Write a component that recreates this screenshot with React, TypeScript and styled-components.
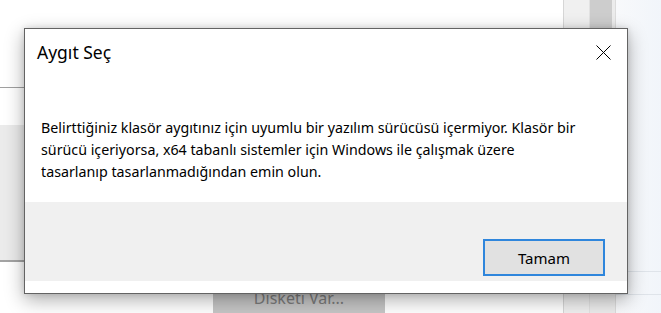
import styled, { createGlobalStyle } from 'styled-components'

const GlobalStyle = createGlobalStyle`
  html, body {
    margin: 0;
    padding: 0;
    background: #ffffff;
    overflow: hidden;
  }
  body {
    font-family: 'Noto Sans', 'Liberation Sans', sans-serif;
  }
`

const Desktop = styled.div`
  position: relative;
  display: flex;
  width: 661px;
  height: 313px;
  overflow: hidden;
`

const LeftPane = styled.div`
  display: flex;
  flex-direction: column;
  width: 563px;
  border-right: 1px solid #d6d6d6;
  background: #ffffff;
`

const PaneHeader = styled.div`
  height: 90px;
  border-bottom: 1px solid #a0a0a0;
`

const PaneGap = styled.div`
  height: 38px;
`

const ListArea = styled.div`
  height: 139px;
  background: #ebebeb;
  border-bottom: 2px solid #a3a3a3;
`

const PaneFooter = styled.div`
  flex: 1;
  display: flex;
  padding: 25px 0 0 213px;
`

const DisabledButton = styled.div`
  width: 172px;
  height: 26px;
  background: #c6c6c6;
  color: #7b7b7b;
  font-size: 16px;
  display: flex;
  justify-content: center;
  padding-top: 0;
  box-sizing: border-box;
`

const Strip = styled.div`
  width: 25px;
  background: #f0f0f0;
  border-right: 1px solid #e2e2e2;
`

const ScrollTrack = styled.div`
  width: 25px;
  background: #ececec;
  border-right: 1px solid #dcdcdc;
`

const ScrollThumb = styled.div`
  height: 120px;
  margin: 0 3px 0 0;
  background: #cdcdcd;
`

const RightArea = styled.div`
  flex: 1;
  display: flex;
  flex-direction: column;
  background: linear-gradient(90deg, #f8f9fb, #f1f5fa);
`

const RightRow = styled.div<{ $h: number }>`
  height: ${(p) => p.$h}px;
  border-bottom: 1px solid #dfe4ea;
`

const Dialog = styled.div`
  position: absolute;
  left: 24px;
  top: 28px;
  width: 604px;
  height: 266px;
  box-sizing: border-box;
  border: 1px solid #636363;
  background: #ffffff;
  display: flex;
  flex-direction: column;
  box-shadow: 0 6px 18px rgba(0, 0, 0, 0.32), 0 0 6px rgba(0, 0, 0, 0.12);
`

const TitleBar = styled.div`
  height: 46px;
  display: flex;
  align-items: center;
  justify-content: space-between;
  padding: 0 16px 0 12px;
`

const Title = styled.span`
  font-size: 17.5px;
  color: #000000;
`

const CloseIcon = styled.svg`
  width: 15px;
  height: 15px;
  display: block;
`

const Body = styled.div`
  height: 127px;
  box-sizing: border-box;
  padding: 42px 16px 0 16px;
  font-size: 14.25px;
  line-height: 22px;
  color: #000000;
`

const Footer = styled.div`
  height: 79px;
  background: #f0f0f0;
  display: flex;
  justify-content: flex-end;
  align-items: flex-end;
  padding: 0 22px 5px 0;
  box-sizing: border-box;
`

const PrimaryButton = styled.button`
  width: 122px;
  height: 37px;
  box-sizing: border-box;
  border: 2px solid #2f86dc;
  background: #e1e1e1;
  color: #000000;
  font-family: inherit;
  font-size: 15px;
  padding: 0;
`

const BottomStrip = styled.div`
  flex: 1;
  background: #ffffff;
`

export default function App() {
  return (
    <>
      <GlobalStyle />
      <Desktop>
        <LeftPane>
          <PaneHeader />
          <PaneGap />
          <ListArea />
          <PaneFooter>
            <DisabledButton>Disketi Var...</DisabledButton>
          </PaneFooter>
        </LeftPane>
        <Strip />
        <ScrollTrack>
          <ScrollThumb />
        </ScrollTrack>
        <RightArea>
          <RightRow $h={271} />
          <RightRow $h={22} />
        </RightArea>

        <Dialog>
          <TitleBar>
            <Title>Aygıt Seç</Title>
            <CloseIcon viewBox="0 0 15 15">
              <path d="M0.5 0.5 L14.5 14.5 M14.5 0.5 L0.5 14.5" stroke="#000" strokeWidth="1" fill="none" />
            </CloseIcon>
          </TitleBar>
          <Body>
            Belirttiğiniz klasör aygıtınız için uyumlu bir yazılım sürücüsü içermiyor. Klasör bir
            <br />
            sürücü içeriyorsa, x64 tabanlı sistemler için Windows ile çalışmak üzere
            <br />
            tasarlanıp tasarlanmadığından emin olun.
          </Body>
          <Footer>
            <PrimaryButton>Tamam</PrimaryButton>
          </Footer>
          <BottomStrip />
        </Dialog>
      </Desktop>
    </>
  )
}
